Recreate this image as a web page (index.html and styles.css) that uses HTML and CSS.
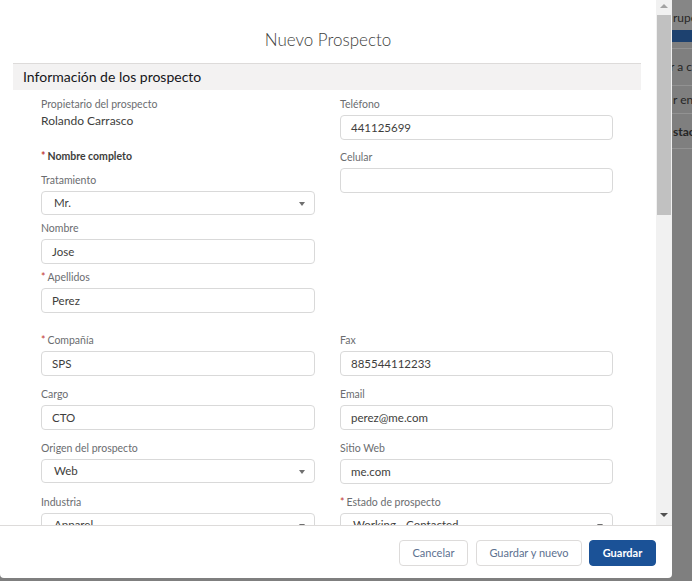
FILE: index.html
```html
<!DOCTYPE html>
<html lang="es">
<head>
  <meta charset="UTF-8">
  <meta name="viewport" content="width=device-width, initial-scale=1.0">
  <title>Nuevo Prospecto</title>
  <link rel="stylesheet" href="styles.css">
</head>
<body>
  <div class="screen">
    <div class="modal">
      <div class="modal-main">
        <div class="scroll-area">
          <h2 class="modal-title">Nuevo Prospecto</h2>
          <section class="section">
            <h3 class="section-title">Información de los prospecto</h3>

            <div class="form-top">
              <div class="col">
                <div class="field">
                  <span class="label">Propietario del prospecto</span>
                  <span class="static-value">Rolando Carrasco</span>
                </div>
                <div class="group-title"><span class="req">*</span>Nombre completo</div>
                <div class="field gap-10">
                  <span class="label">Tratamiento</span>
                  <div class="input select">Mr.<span class="caret"></span></div>
                </div>
                <div class="field gap-6">
                  <span class="label">Nombre</span>
                  <div class="input">Jose</div>
                </div>
                <div class="field gap-6">
                  <span class="label"><span class="req">*</span>Apellidos</span>
                  <div class="input">Perez</div>
                </div>
              </div>
              <div class="col">
                <div class="field">
                  <span class="label">Teléfono</span>
                  <div class="input">441125699</div>
                </div>
                <div class="field gap-10">
                  <span class="label">Celular</span>
                  <div class="input"></div>
                </div>
              </div>
            </div>

            <div class="form-grid">
              <div class="field">
                <span class="label"><span class="req">*</span>Compañía</span>
                <div class="input">SPS</div>
              </div>
              <div class="field">
                <span class="label">Fax</span>
                <div class="input">885544112233</div>
              </div>
              <div class="field">
                <span class="label">Cargo</span>
                <div class="input">CTO</div>
              </div>
              <div class="field">
                <span class="label">Email</span>
                <div class="input">perez@me.com</div>
              </div>
              <div class="field">
                <span class="label">Origen del prospecto</span>
                <div class="input select">Web<span class="caret"></span></div>
              </div>
              <div class="field">
                <span class="label">Sitio Web</span>
                <div class="input">me.com</div>
              </div>
              <div class="field">
                <span class="label">Industria</span>
                <div class="input select">Apparel<span class="caret"></span></div>
              </div>
              <div class="field">
                <span class="label"><span class="req">*</span>Estado de prospecto</span>
                <div class="input select">Working - Contacted<span class="caret"></span></div>
              </div>
            </div>
          </section>
        </div>

        <div class="scrollbar">
          <span class="sb-arrow sb-up"></span>
          <div class="sb-thumb"></div>
          <span class="sb-arrow sb-down"></span>
        </div>
      </div>

      <div class="modal-footer">
        <button class="btn btn-cancel">Cancelar</button>
        <button class="btn btn-wide">Guardar y nuevo</button>
        <button class="btn btn-brand">Guardar</button>
      </div>
    </div>

    <!-- page behind the overlay -->
    <div class="backdrop">
      <div class="bd-row bd-first">rupo</div>
      <div class="bd-band"></div>
      <div class="bd-spacer"></div>
      <div class="bd-row bd-tall">r a ca</div>
      <div class="bd-row bd-mid">r en</div>
      <div class="bd-row bd-tall2">stac</div>
    </div>
  </div>
</body>
</html>
```

FILE: styles.css
```css
body {
  margin: 0;
  padding: 0;
  background: #7f7f7f;
  font-family: Lato, "Open Sans", sans-serif;
  color: #3e3e3c;
}

.screen {
  display: flex;
  height: 581px;
  overflow: hidden;
}

.modal {
  width: 672px;
  height: 578px;
  flex: none;
  background: #fff;
  border-radius: 0 0 4px 4px;
  display: flex;
  flex-direction: column;
}

.modal-main {
  display: flex;
  height: 525px;
}

.scroll-area {
  width: 656px;
  height: 525px;
  overflow: hidden;
}

.modal-title {
  margin: 0;
  padding-top: 30px;
  font-size: 17px;
  line-height: 20px;
  font-weight: 300;
  text-align: center;
  color: #3e3e3c;
}

.section {
  margin: 13px 15px 0 13px;
}

.section-title {
  margin: 0;
  height: 27px;
  box-sizing: border-box;
  border-top: 1px solid #dddbda;
  background: #f3f2f2;
  padding-left: 10px;
  font-size: 14px;
  line-height: 25px;
  font-weight: 400;
  color: #16161a;
}

.form-top,
.form-grid {
  display: grid;
  grid-template-columns: 274px 273px;
  column-gap: 25px;
  padding: 0 28px;
}

.form-top {
  padding-top: 7px;
  align-items: start;
}

.form-grid {
  margin-top: 20px;
  row-gap: 11px;
  align-items: start;
}

.col {
  display: flex;
  flex-direction: column;
}

.field {
  display: flex;
  flex-direction: column;
}

.gap-10 {
  margin-top: 10px;
}

.gap-6 {
  margin-top: 6px;
}

.label {
  font-size: 10.5px;
  line-height: 14px;
  color: #6b6d70;
  margin-bottom: 4px;
}

.req {
  color: #c23934;
  margin-right: 2px;
}

.static-value {
  margin-top: -2px;
  font-size: 12px;
  line-height: 16px;
  color: #3e3e3c;
}

.group-title {
  margin-top: 20px;
  font-size: 10.5px;
  line-height: 14px;
  font-weight: 700;
  color: #3e3e3c;
}

.input {
  position: relative;
  height: 25px;
  box-sizing: border-box;
  border: 1px solid #d9d9d9;
  border-radius: 4px;
  padding: 0 10px;
  font-size: 11.5px;
  line-height: 23px;
  color: #3e3e3c;
  background: #fff;
  white-space: nowrap;
}

.select {
  height: 24px;
  line-height: 22px;
  padding-left: 12px;
}

.caret {
  position: absolute;
  right: 9px;
  top: 10px;
  width: 0;
  height: 0;
  border-left: 3.5px solid transparent;
  border-right: 3.5px solid transparent;
  border-top: 4px solid #6f6f6f;
}

.scrollbar {
  width: 16px;
  height: 525px;
  background: #f1f1f1;
  position: relative;
}

.sb-thumb {
  position: absolute;
  left: 1px;
  top: 15px;
  width: 14px;
  height: 200px;
  background: #c1c1c1;
}

.sb-arrow {
  position: absolute;
  left: 4px;
  width: 0;
  height: 0;
  border-left: 4px solid transparent;
  border-right: 4px solid transparent;
}

.sb-up {
  top: 4px;
  border-bottom: 4px solid #a3a3a3;
}

.sb-down {
  top: 513px;
  border-top: 4px solid #505050;
}

.modal-footer {
  height: 53px;
  box-sizing: border-box;
  border-top: 1px solid #dddbda;
  display: flex;
  justify-content: flex-end;
  align-items: flex-start;
  gap: 7px;
  padding: 14px 16px 0 0;
}

.btn {
  height: 26px;
  padding: 0;
  flex: none;
  text-align: center;
  border: 1px solid #dddbda;
  border-radius: 4px;
  background: #fff;
  color: #5d7190;
  font-family: Lato, "Open Sans", sans-serif;
  font-size: 11px;
  line-height: 24px;
}

.btn-cancel {
  width: 69px;
  margin-right: 1px;
}

.btn-wide {
  width: 106px;
}

.btn-brand {
  width: 67px;
  background: #1b5297;
  border-color: #1b5297;
  color: #fff;
  font-weight: 700;
}

.backdrop {
  flex: 1;
  height: 581px;
  overflow: hidden;
  background: #7f7f7f;
  font-size: 12px;
  color: #262626;
  white-space: nowrap;
}

.bd-row {
  box-sizing: border-box;
  border-bottom: 1px solid #929292;
  padding-left: 1px;
}

.bd-first {
  height: 30px;
  padding-top: 10px;
  line-height: 16px;
  background: #868686;
  border-bottom: none;
}

.bd-band {
  height: 12px;
  background: #1d416f;
}

.bd-spacer {
  height: 6px;
  border-bottom: 1px solid #929292;
}

.bd-tall {
  height: 37px;
  line-height: 36px;
  text-indent: -3px;
}

.bd-mid {
  height: 28px;
  line-height: 27px;
}

.bd-tall2 {
  height: 35px;
  line-height: 36px;
  font-weight: 700;
}
```
